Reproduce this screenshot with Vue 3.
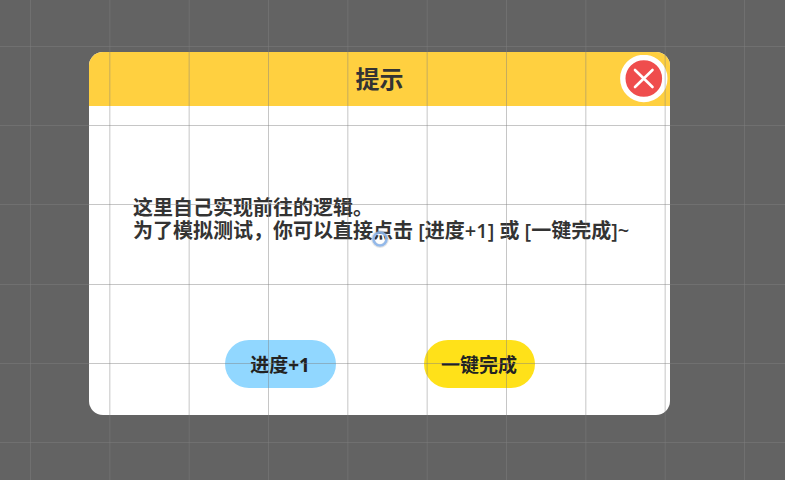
<template>
    <div class="scene">
        <div class="dialog" role="dialog" aria-labelledby="dialog-title">
            <header class="dialog-header">
                <h1 id="dialog-title">提示</h1>
                <button class="close" type="button" aria-label="关闭">
                    <svg viewBox="0 0 48 48">
                        <circle cx="23.8" cy="23.5" r="21" fill="#ef4d4d" stroke="#fff" stroke-width="5.4" />
                        <path d="M15 15L32.5 32M32.5 15L15 32" fill="none" stroke="#fff" stroke-width="2.6"
                            stroke-linecap="round" />
                    </svg>
                </button>
            </header>
            <p class="message">这里自己实现前往的逻辑。<br>为了模拟测试，你可以直接点击 [进度+1] 或 [一键完成]~</p>
            <div class="actions">
                <button class="btn btn-blue" type="button" @click="addProgress">进度+1</button>
                <button class="btn btn-yellow" type="button" @click="finish">一键完成</button>
            </div>
            <!-- pivot -->
            <svg class="pivot" viewBox="0 0 20 20">
                <circle cx="10" cy="10" r="7" fill="none" stroke="#888" stroke-opacity="0.22" stroke-width="4" />
                <circle cx="10" cy="10" r="6.5" fill="none" stroke="#8ab4ea" stroke-opacity="0.9" stroke-width="2.6" />
            </svg>
        </div>
        <svg class="grid">
            <line v-for="x in columns" :key="'c' + x" :x1="x" :x2="x" y1="0" y2="100%" />
            <line v-for="y in rows" :key="'r' + y" :y1="y" :y2="y" x1="0" x2="100%" />
        </svg>
    </div>
</template>
<script setup>
import { ref } from 'vue';

const step = 238 / 3;
const columns = Array.from({ length: 30 }, (_, i) => 30.5 + i * step);
const rows = Array.from({ length: 20 }, (_, i) => Math.floor(46 + i * step) + 0.5);

let progress = ref(0);

let addProgress = () => {
    progress.value++;
}

let finish = () => {
    progress.value = 100;
}
</script>
<style>
body {
    background: #636363;
}
</style>
<style scoped>
.scene {
    position: relative;
    box-sizing: border-box;
    min-height: 100vh;
    padding: 52px 115px 48px 89px;
    background: #636363;
    font-family: "Open Sans", "Noto Sans CJK SC", sans-serif;
    font-weight: 600;
    color: #333;
}

.dialog {
    position: relative;
    background: #fff;
    border-radius: 14px;
}

.dialog-header {
    display: flex;
    align-items: center;
    justify-content: center;
    height: 54px;
    background: #ffd040;
    border-radius: 14px 14px 0 0;
}

h1 {
    margin: 0;
    font-size: 24px;
    line-height: 32px;
    font-weight: 700;
}

.close {
    position: absolute;
    top: 3px;
    right: 2px;
    width: 48px;
    height: 48px;
    padding: 0;
    border: none;
    background: none;
    cursor: pointer;
}

.close svg {
    display: block;
}

.message {
    margin: 0;
    padding: 90px 24px 98px 44px;
    font-size: 20px;
    line-height: 23px;
}

.actions {
    display: flex;
    justify-content: center;
    gap: 88px;
    padding-bottom: 27px;
}

.btn {
    width: 111px;
    height: 48px;
    padding: 0;
    border: none;
    border-radius: 24px;
    font-family: inherit;
    font-size: 19px;
    font-weight: 700;
    color: #222;
    cursor: pointer;
}

.btn-blue {
    background: #91d7ff;
}

.btn-yellow {
    background: #ffe119;
}

.pivot {
    position: absolute;
    top: 177px;
    left: 50%;
    width: 20px;
    height: 20px;
    margin-left: -10px;
}

.grid {
    position: absolute;
    top: 0;
    left: 0;
    width: 100%;
    height: 100%;
    pointer-events: none;
}

.grid line {
    stroke: #808080;
    stroke-opacity: 0.45;
}
</style>
